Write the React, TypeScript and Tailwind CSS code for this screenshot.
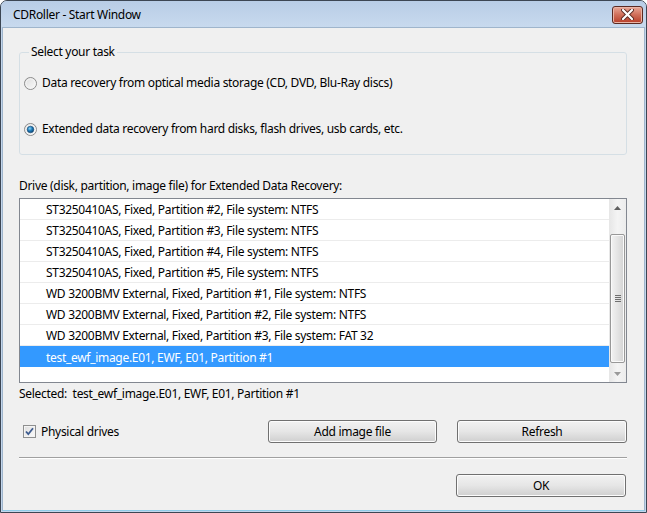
import React from "react";

const rows = [
  "ST3250410AS, Fixed, Partition #2, File system: NTFS",
  "ST3250410AS, Fixed, Partition #3, File system: NTFS",
  "ST3250410AS, Fixed, Partition #4, File system: NTFS",
  "ST3250410AS, Fixed, Partition #5, File system: NTFS",
  "WD 3200BMV External, Fixed, Partition #1, File system: NTFS",
  "WD 3200BMV External, Fixed, Partition #2, File system: NTFS",
  "WD 3200BMV External, Fixed, Partition #3, File system: FAT 32",
];

function Radio({ checked }: { checked?: boolean }) {
  return (
    <svg width="13" height="13" viewBox="0 0 13 13" className="shrink-0">
      <defs>
        <linearGradient id="rbg" x1="0" y1="0" x2="1" y2="1">
          <stop offset="0" stopColor="#dcdcdc" />
          <stop offset="1" stopColor="#fbfbfb" />
        </linearGradient>
        <radialGradient id="rdot" cx="0.4" cy="0.35" r="0.7">
          <stop offset="0" stopColor="#8fd6f7" />
          <stop offset="0.5" stopColor="#1c7ab8" />
          <stop offset="1" stopColor="#0c3f6b" />
        </radialGradient>
      </defs>
      <circle cx="6.5" cy="6.5" r="6" fill="url(#rbg)" stroke="#8b8b8b" />
      <circle cx="6.5" cy="6.5" r="4.6" fill="none" stroke="#f4f4f4" />
      {checked && <circle cx="6.5" cy="6.5" r="3.3" fill="url(#rdot)" stroke="#174a75" strokeWidth="0.6" />}
    </svg>
  );
}

function Checkbox() {
  return (
    <svg width="13" height="13" viewBox="0 0 13 13" className="shrink-0">
      <defs>
        <linearGradient id="cbg" x1="0" y1="0" x2="1" y2="1">
          <stop offset="0" stopColor="#dcdcdc" />
          <stop offset="1" stopColor="#fdfdfd" />
        </linearGradient>
      </defs>
      <rect x="0.5" y="0.5" width="12" height="12" fill="url(#cbg)" stroke="#8e8f8f" />
      <rect x="1.5" y="1.5" width="10" height="10" fill="none" stroke="#f4f4f4" />
      <path d="M3 6.5 L5.3 9.2 L10 3.2" fill="none" stroke="#3d5b8f" strokeWidth="1.8" />
    </svg>
  );
}

function Button({ label, className }: { label: string; className?: string }) {
  return (
    <div
      className={
        "h-[23px] rounded-[3px] border border-[#707070] bg-gradient-to-b from-[#f2f2f2] via-[#e6e6e6] to-[#cfcfcf] flex items-center justify-center shadow-[inset_0_0_0_1px_#fcfcfc] " +
        (className ?? "")
      }
    >
      {label}
    </div>
  );
}

function Scrollbar() {
  return (
    <div className="w-[17px] flex flex-col bg-gradient-to-r from-[#e6e6e6] via-[#f4f4f4] to-[#ececec]">
      <div className="h-[17px] flex items-center justify-center">
        <svg width="7" height="4" viewBox="0 0 7 4">
          <path d="M0 4 L3.5 0 L7 4 Z" fill="#606060" />
        </svg>
      </div>
      <div className="mt-[18px] mx-[1px] h-[129px] rounded-[2px] border border-[#989898] bg-gradient-to-r from-[#f3f3f3] via-[#e4e4e4] to-[#d3d3d3] shadow-[inset_0_0_0_1px_#fafafa] flex flex-col items-center justify-center gap-[1px]">
        <div className="w-[6px] h-[1px] bg-[#6f6f6f]" />
        <div className="w-[6px] h-[1px] bg-[#6f6f6f]" />
        <div className="w-[6px] h-[1px] bg-[#6f6f6f]" />
        <div className="w-[6px] h-[1px] bg-[#6f6f6f]" />
      </div>
      <div className="flex-1" />
      <div className="h-[17px] flex items-center justify-center">
        <svg width="7" height="4" viewBox="0 0 7 4">
          <path d="M0 0 L7 0 L3.5 4 Z" fill="#9a9a9a" />
        </svg>
      </div>
    </div>
  );
}

export default function App() {
  return (
    <div
      className="w-[647px] h-[513px] flex flex-col border border-[#3c4653] rounded-t-[7px] bg-[#c3d6ec] overflow-hidden text-[12px] leading-[16px] tracking-[-0.3px] text-black"
      style={{ fontFamily: '"Segoe UI", "Noto Sans", "Open Sans", sans-serif' }}
    >
      {/* title bar */}
      <div className="h-[26px] flex items-center justify-between pl-[12px] pr-[3px] bg-gradient-to-b from-[#b8cde6] to-[#c8daee]">
        <span className="text-[12px] pt-[1px]">CDRoller - Start Window</span>
        <div className="w-[31px] h-[18px] mt-[1px] rounded-[3px] border border-[#5b2a22] bg-gradient-to-b from-[#e8a797] via-[#cf6d58] to-[#b73c27] shadow-[inset_0_0_0_1px_#e9b4a6] flex items-center justify-center">
          <svg width="13" height="11" viewBox="0 0 13 11">
            <path d="M2 1 L11 10 M11 1 L2 10" stroke="#5a2a22" strokeWidth="4" strokeLinecap="round" />
            <path d="M2 1 L11 10 M11 1 L2 10" stroke="#ffffff" strokeWidth="2.2" strokeLinecap="round" />
          </svg>
        </div>
      </div>

      {/* client */}
      <div className="flex-1 mx-[1px] mb-[1px] bg-[#f0f0f0] border border-[#9fb5cc] border-b-[#8fcbe8] flex flex-col pl-[16px] pr-[17px]">
        <fieldset className="mt-[16px] border border-[#d5dfe5] rounded-[3px] pl-[4px] pb-[17px]">
          <legend className="ml-[5px] px-[2px]">Select your task</legend>
          <div className="mt-[15px] flex items-center h-[16px]">
            <Radio />
            <span className="ml-[5px]">Data recovery from optical media storage (CD, DVD, Blu-Ray discs)</span>
          </div>
          <div className="mt-[30px] flex items-center h-[16px]">
            <Radio checked />
            <span className="ml-[5px]">Extended data recovery from hard disks, flash drives, usb cards, etc.</span>
          </div>
        </fieldset>

        <div className="mt-[23px]">Drive (disk, partition, image file) for Extended Data Recovery:</div>

        <div className="mt-[4px] h-[185px] border border-[#828790] bg-white flex">
          <div className="flex-1 flex flex-col">
            {rows.map((r) => (
              <div key={r} className="h-[21px] border-b border-[#ececec] pl-[26px] pt-[2px] flex items-center">
                {r}
              </div>
            ))}
            <div className="h-[21px] bg-[#3399ff] text-white pl-[26px] pt-[2px] flex items-center">
              test_ewf_image.E01, EWF, E01, Partition #1
            </div>
          </div>
          <Scrollbar />
        </div>

        <div className="mt-[3px]">Selected:&nbsp; test_ewf_image.E01, EWF, E01, Partition #1</div>

        <div className="mt-[18px] flex items-center">
          <div className="pl-[4px] flex items-center">
            <Checkbox />
            <span className="ml-[5px]">Physical drives</span>
          </div>
          <div className="flex-1" />
          <Button label="Add image file" className="w-[169px]" />
          <Button label="Refresh" className="w-[170px] ml-[20px]" />
        </div>

        <div className="mt-[14px] h-[1px] bg-[#a0a0a0] border-b border-white box-content" />

        <div className="mt-[15px] flex justify-end pr-[1px]">
          <Button label="OK" className="w-[170px]" />
        </div>
      </div>
    </div>
  );
}
